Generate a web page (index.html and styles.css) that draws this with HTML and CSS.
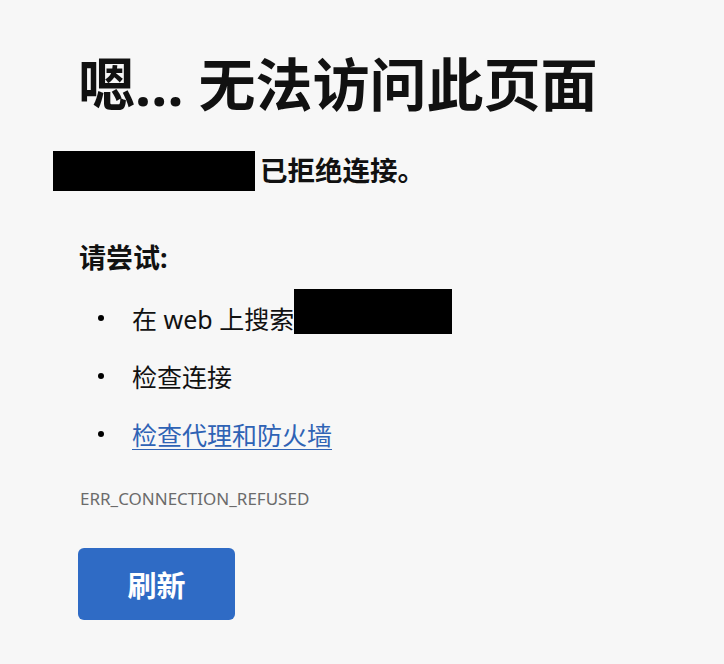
FILE: index.html
```html
<!DOCTYPE html>
<html lang="zh-CN">
<head>
    <meta charset="UTF-8">
    <meta name="viewport" content="width=device-width, initial-scale=1.0">
    <title>无法访问此页面</title>
    <link rel="stylesheet" href="styles.css">
</head>
<body>
    <div class="container">
        <h1>嗯… 无法访问此页面</h1>
        <h2><span class="redacted host"></span>已拒绝连接。</h2>

        <div class="suggestions">
            <p class="try-label">请尝试:</p>
            <ul>
                <li>在 web 上搜索<span class="redacted query"></span></li>
                <li>检查连接</li>
                <li><a href="#">检查代理和防火墙</a></li>
            </ul>
        </div>

        <p class="error-code">ERR_CONNECTION_REFUSED</p>

        <button type="button" class="reload">刷新</button>
    </div>
</body>
</html>
```

FILE: styles.css
```css
body {
    margin: 0;
    background-color: #f7f7f7;
    color: #111;
    font-family: "Noto Sans", "Noto Sans CJK SC", sans-serif;
}
.container {
    padding: 44px 0 0 80px;
}
h1 {
    margin: 0 0 0 -2px;
    font-size: 57px;
    font-weight: bold;
    line-height: 80px;
}
h2 {
    margin: 25px 0 0;
    font-size: 27.5px;
    font-weight: bold;
    line-height: 44px;
    display: flex;
    align-items: center;
}
.redacted {
    display: inline-block;
    background-color: #000;
}
.host {
    width: 202px;
    height: 40px;
    margin-left: -27px;
    margin-right: 5px;
}
.query {
    width: 158px;
    height: 45px;
}
.suggestions {
    margin-top: 47px;
}
.try-label {
    margin: 0 0 0 -1px;
    font-size: 27px;
    font-weight: bold;
    line-height: 36px;
}
ul {
    list-style: none;
    margin: 13px 0 0;
    padding: 0;
    font-size: 25px;
}
li {
    height: 58px;
    display: flex;
    align-items: center;
}
li::before {
    content: "";
    width: 6px;
    height: 6px;
    border-radius: 50%;
    background-color: #000;
    margin-left: 18px;
    margin-right: 28px;
}
li .query {
    margin-bottom: 13px;
}
a {
    color: #2f63b5;
    text-decoration: underline;
    text-underline-offset: 4px;
    text-decoration-thickness: 1px;
}
.error-code {
    margin: 24px 0 0;
    font-size: 17px;
    line-height: 24px;
    color: #6b6b6b;
}
.reload {
    margin: 37px 0 0 -2px;
    width: 157px;
    height: 72px;
    border: none;
    border-radius: 6px;
    background-color: #2f6bc5;
    color: #fff;
    font-family: "Noto Sans CJK SC", sans-serif;
    font-size: 29px;
    font-weight: bold;
    cursor: pointer;
}
```
